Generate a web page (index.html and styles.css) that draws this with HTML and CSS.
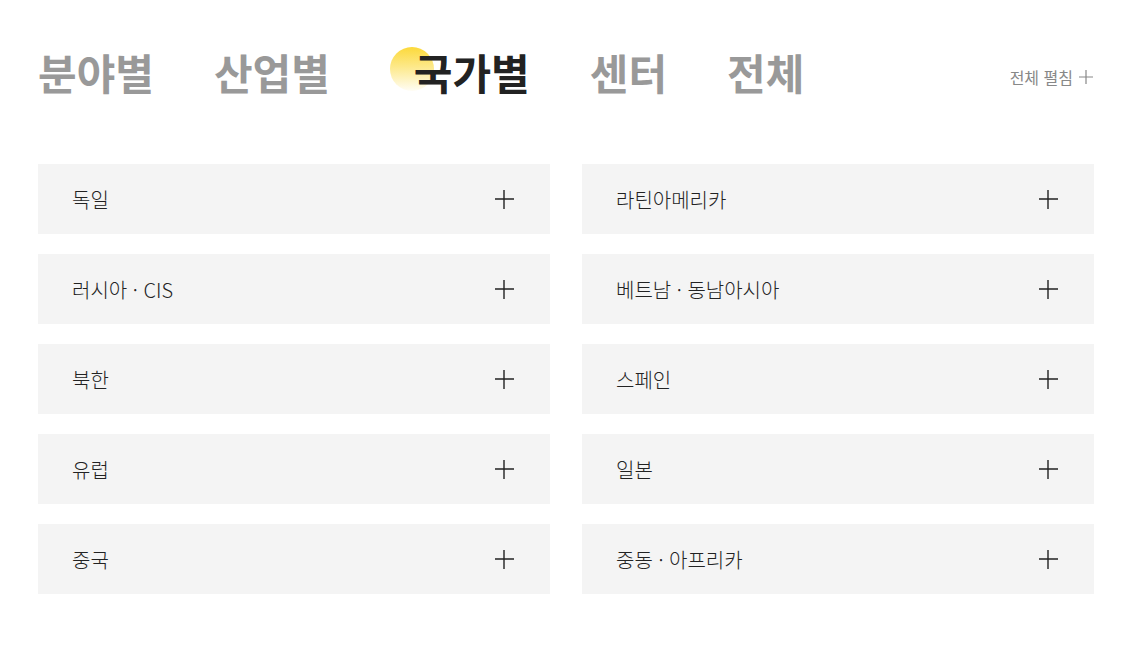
FILE: index.html
```html
<!DOCTYPE html>
<html lang="ko">
<head>
  <meta charset="UTF-8">
  <title>국가별</title>
  <link rel="stylesheet" href="styles.css">
</head>
<body>
  <div class="wrap">
    <header class="tabs-bar">
      <nav class="tabs">
        <a class="tab">분야별</a>
        <a class="tab">산업별</a>
        <a class="tab active">국가별</a>
        <a class="tab">센터</a>
        <a class="tab">전체</a>
      </nav>
      <button class="expand-all">전체 펼침
        <svg width="16" height="16" viewBox="0 0 16 16"><path d="M8 1v14M1 8h14" stroke="currentColor" stroke-width="1.2"/></svg>
      </button>
    </header>
    <ul class="list">
      <li class="item">독일<svg class="plus" viewBox="0 0 20 20"><path d="M10 1v19M1 10h19" /></svg></li>
      <li class="item">라틴아메리카<svg class="plus" viewBox="0 0 20 20"><path d="M10 1v19M1 10h19" /></svg></li>
      <li class="item">러시아 · CIS<svg class="plus" viewBox="0 0 20 20"><path d="M10 1v19M1 10h19" /></svg></li>
      <li class="item">베트남 · 동남아시아<svg class="plus" viewBox="0 0 20 20"><path d="M10 1v19M1 10h19" /></svg></li>
      <li class="item">북한<svg class="plus" viewBox="0 0 20 20"><path d="M10 1v19M1 10h19" /></svg></li>
      <li class="item">스페인<svg class="plus" viewBox="0 0 20 20"><path d="M10 1v19M1 10h19" /></svg></li>
      <li class="item">유럽<svg class="plus" viewBox="0 0 20 20"><path d="M10 1v19M1 10h19" /></svg></li>
      <li class="item">일본<svg class="plus" viewBox="0 0 20 20"><path d="M10 1v19M1 10h19" /></svg></li>
      <li class="item">중국<svg class="plus" viewBox="0 0 20 20"><path d="M10 1v19M1 10h19" /></svg></li>
      <li class="item">중동 · 아프리카<svg class="plus" viewBox="0 0 20 20"><path d="M10 1v19M1 10h19" /></svg></li>
    </ul>
  </div>
</body>
</html>
```
FILE: styles.css
```css
* { box-sizing: border-box; margin: 0; padding: 0; }
body {
  font-family: 'Noto Sans CJK KR', 'Noto Sans', sans-serif;
  background: #fff;
  color: #222;
}
.wrap {
  width: 1056px;
  margin-left: 38px;
  padding-top: 42px;
}
.tabs-bar {
  display: flex;
  justify-content: space-between;
  align-items: center;
  height: 60px;
}
.tabs {
  display: flex;
  align-items: center;
  gap: 60px;
}
.tab {
  position: relative;
  font-size: 42px;
  font-weight: 700;
  color: #999;
  line-height: 60px;
}
.tab.active {
  color: #222;
  padding-left: 24px;
}
.tab.active::before {
  content: '';
  position: absolute;
  left: 0;
  top: 5px;
  width: 44px;
  height: 44px;
  border-radius: 50%;
  background: linear-gradient(to bottom, #fcd93a 0%, #fde98a 45%, #fffdf5 100%);
  z-index: -1;
}
.expand-all {
  display: flex;
  align-items: center;
  gap: 5px;
  background: none;
  border: none;
  font-family: inherit;
  font-size: 16px;
  color: #888;
  margin-top: 10px;
}
.list {
  list-style: none;
  display: grid;
  grid-template-columns: 1fr 1fr;
  column-gap: 32px;
  row-gap: 20px;
  margin-top: 62px;
}
.item {
  display: flex;
  justify-content: space-between;
  align-items: center;
  height: 70px;
  padding: 0 36px 0 34px;
  background: #f4f4f4;
  font-size: 20px;
  font-weight: 300;
  color: #222;
}
.plus {
  width: 20px;
  height: 20px;
  stroke: #222;
  stroke-width: 1.4;
  fill: none;
}
```
